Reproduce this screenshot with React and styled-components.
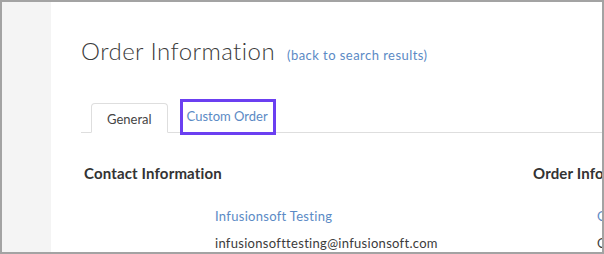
import React from "react";
import styled, { createGlobalStyle } from "styled-components";

const Global = createGlobalStyle`
  html, body {
    margin: 0;
    padding: 0;
    background: #ffffff;
  }
  * {
    box-sizing: border-box;
  }
`;

const Frame = styled.div`
  width: 604px;
  height: 254px;
  border: 2px solid #a3a3a3;
  display: flex;
  overflow: hidden;
  font-family: Lato, "Liberation Sans", sans-serif;
  color: #3b3b3b;
`;

const Sidebar = styled.div`
  width: 49px;
  flex-shrink: 0;
  background-color: #f4f4f4;
`;

const Main = styled.div`
  flex: 1;
  min-width: 0;
  background-color: #ffffff;
  padding: 35px 0 0 30px;
  overflow: hidden;
`;

const Header = styled.div`
  display: flex;
  align-items: baseline;
  gap: 12px;
`;

const Title = styled.h1`
  margin: 0;
  font-size: 24px;
  font-weight: 300;
  line-height: 28px;
  letter-spacing: 0.45px;
  color: #3b3b3b;
`;

const BackLink = styled.a`
  font-size: 13px;
  letter-spacing: 0.45px;
  color: #5b8ac5;
  text-decoration: none;
`;

const Tabs = styled.div`
  display: flex;
  align-items: flex-end;
  height: 36px;
  margin-top: 32px;
  border-bottom: 1px solid #dedede;
  margin-right: -40px;
  padding-left: 10px;
`;

const Tab = styled.div`
  height: ${({ $active }) => ($active ? "30px" : "36px")};
  display: flex;
  align-items: center;
  font-size: 13px;
  color: ${({ $active }) => ($active ? "#444444" : "#5b8ac5")};
  background: #ffffff;
  border: ${({ $active }) => ($active ? "1px solid #dedede" : "3px solid #6b3ff1")};
  border-bottom: ${({ $active }) => ($active ? "1px solid #ffffff" : "3px solid #6b3ff1")};
  border-radius: ${({ $active }) => ($active ? "4px 4px 0 0" : "0")};
  padding: ${({ $active }) => ($active ? "2px 15px 0 15px" : "0 5px 2px 4px")};
  margin-right: 12px;
  margin-bottom: ${({ $active }) => ($active ? "-1px" : "-3px")};
`;

const Columns = styled.div`
  display: flex;
  padding-left: 3px;
  margin-top: 31px;
`;

const Column = styled.div`
  width: ${({ $width }) => $width};
  flex-shrink: 0;
`;

const SectionTitle = styled.h2`
  margin: 0;
  font-size: 15px;
  font-weight: 700;
  line-height: 18px;
  letter-spacing: 0.15px;
  color: #333333;
  white-space: nowrap;
`;

const Rows = styled.div`
  margin-top: 25px;
  padding-left: ${({ $indent }) => $indent};
  display: flex;
  flex-direction: column;
  gap: 9px;
`;

const Value = styled.div`
  font-size: 13px;
  line-height: 18px;
  letter-spacing: 0.3px;
  white-space: nowrap;
  color: ${({ $link }) => ($link ? "#5b8ac5" : "#3b3b3b")};
`;

export default function App() {
  return (
    <>
      <Global />
      <Frame>
        <Sidebar />
        <Main>
          <Header>
            <Title>Order Information</Title>
            <BackLink href="#">(back to search results)</BackLink>
          </Header>
          <Tabs>
            <Tab $active>General</Tab>
            <Tab>Custom Order</Tab>
          </Tabs>
          <Columns>
            <Column $width="449px">
              <SectionTitle>Contact Information</SectionTitle>
              <Rows $indent="131px">
                <Value $link>Infusionsoft Testing</Value>
                <Value>infusionsofttesting@infusionsoft.com</Value>
              </Rows>
            </Column>
            <Column $width="200px">
              <SectionTitle>Order Information</SectionTitle>
              <Rows $indent="64px">
                <Value $link>Order</Value>
                <Value>Order</Value>
              </Rows>
            </Column>
          </Columns>
        </Main>
      </Frame>
    </>
  );
}
